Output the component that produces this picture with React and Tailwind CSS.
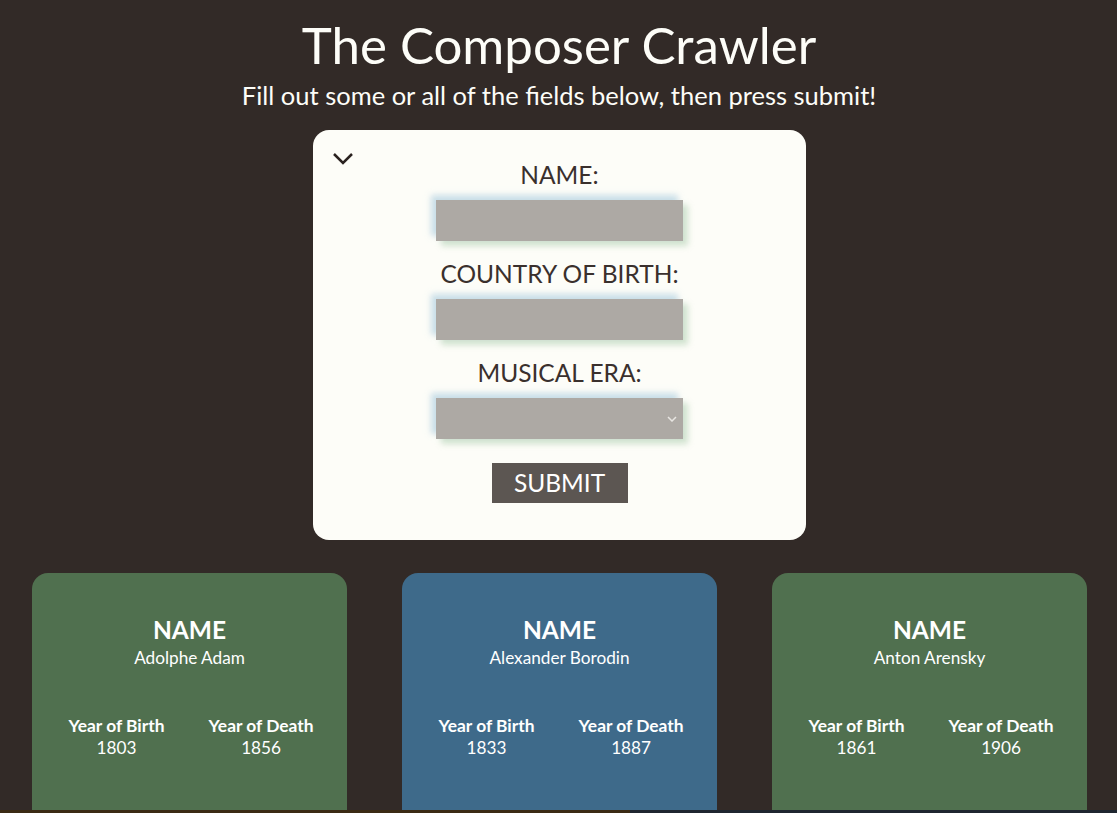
const composers = [
  { name: 'Adolphe Adam', born: 1803, died: 1856, color: 'bg-[#50704f]' },
  { name: 'Alexander Borodin', born: 1833, died: 1887, color: 'bg-[#3e6a8a]' },
  { name: 'Anton Arensky', born: 1861, died: 1906, color: 'bg-[#50704f]' },
];

const field =
  'w-[247px] h-[41px] bg-[#ada9a4] shadow-[-5px_-5px_6px_rgba(180,210,225,0.7),5px_5px_6px_rgba(190,215,190,0.7)] outline-none';

function App() {
  return (
    <div className="h-[813px] overflow-hidden bg-[#322a27] font-['Lato',sans-serif] flex flex-col">
      <header className="text-center text-[#fdfdf8] pt-[13px] pl-[1px]">
        <h1 className="text-[51px] leading-[64px]">The Composer Crawler</h1>
        <p className="text-[25.5px] leading-[34px] mt-[1px]">Fill out some or all of the fields below, then press submit!</p>
      </header>

      <div className="flex justify-center pl-[2px] mt-[18px]">
        <form className="relative w-[493px] h-[410px] bg-[#fdfdf8] rounded-2xl flex flex-col items-center pt-[30px] text-[#3a302d]">
          <svg className="absolute left-[19px] top-[22px]" width="22" height="14" viewBox="0 0 22 14" fill="none">
            <path d="M2 2l9 9 9-9" stroke="#2a2220" strokeWidth="2.5" />
          </svg>
          <label className="text-[24.5px] leading-[30px]">NAME:</label>
          <input className={`${field} mt-[10px]`} />
          <label className="text-[24.5px] leading-[30px] mt-[18px]">COUNTRY OF BIRTH:</label>
          <input className={`${field} mt-[10px]`} />
          <label className="text-[24.5px] leading-[30px] mt-[18px]">MUSICAL ERA:</label>
          <div className={`${field} mt-[10px] flex items-center justify-end pr-[6px]`}>
            <svg width="10" height="6" viewBox="0 0 10 6" fill="none">
              <path d="M1 1l4 4 4-4" stroke="#e8e6e2" strokeWidth="1.5" />
            </svg>
          </div>
          <button type="button" className="mt-[24px] w-[136px] h-[40px] bg-[#5c5652] text-white text-[24.5px] leading-none">
            SUBMIT
          </button>
        </form>
      </div>

      <div className="flex justify-center gap-[55px] mt-[33px] pl-[2px] flex-1">
        {composers.map((c) => (
          <div key={c.name} className={`${c.color} w-[315px] rounded-t-2xl text-white text-center pt-[41px]`}>
            <div className="text-[24.5px] font-bold leading-[32px]">NAME</div>
            <div className="text-[17.2px] leading-[24px]">{c.name}</div>
            <div className="flex justify-center gap-[44px] mt-[45px] pl-[3px]">
              <div>
                <div className="text-[17.4px] font-bold leading-[22px]">Year of Birth</div>
                <div className="text-[17.2px] leading-[22px]">{c.born}</div>
              </div>
              <div>
                <div className="text-[17.4px] font-bold leading-[22px]">Year of Death</div>
                <div className="text-[17.2px] leading-[22px]">{c.died}</div>
              </div>
            </div>
          </div>
        ))}
      </div>
      <div className="h-[3px] flex shrink-0">
        <div className="w-[630px] bg-[#3b2a14]"></div>
        <div className="flex-1 bg-[#1f2630]"></div>
      </div>
    </div>
  );
}

export default App;
